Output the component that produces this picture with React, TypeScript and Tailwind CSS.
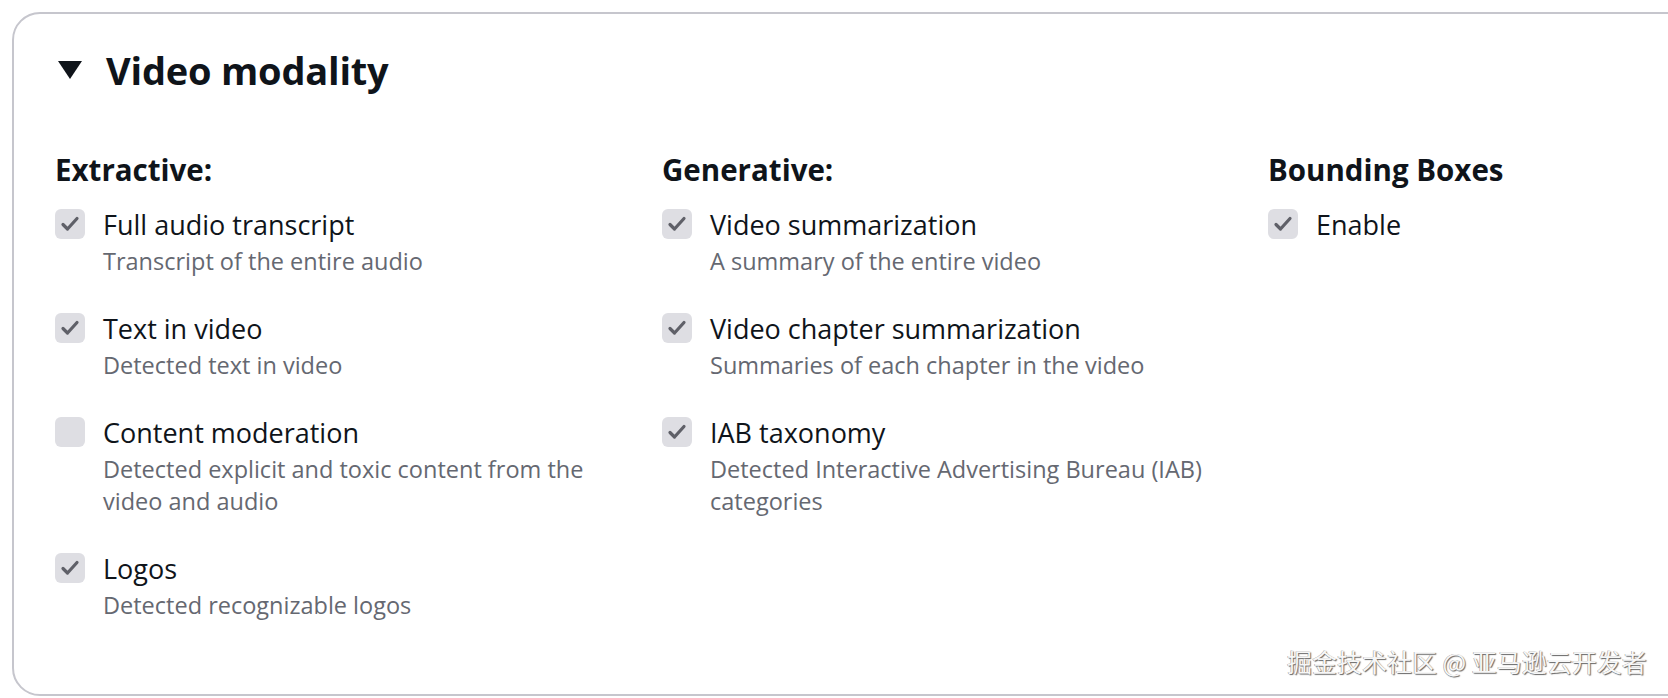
const font = { fontFamily: '"Open Sans", "Noto Sans", sans-serif' }

type Option = { label: string; desc?: string; checked: boolean }

const columns: { title: string; items: Option[] }[] = [
  {
    title: 'Extractive:',
    items: [
      { label: 'Full audio transcript', desc: 'Transcript of the entire audio', checked: true },
      { label: 'Text in video', desc: 'Detected text in video', checked: true },
      {
        label: 'Content moderation',
        desc: 'Detected explicit and toxic content from the video and audio',
        checked: false,
      },
      { label: 'Logos', desc: 'Detected recognizable logos', checked: true },
    ],
  },
  {
    title: 'Generative:',
    items: [
      { label: 'Video summarization', desc: 'A summary of the entire video', checked: true },
      { label: 'Video chapter summarization', desc: 'Summaries of each chapter in the video', checked: true },
      { label: 'IAB taxonomy', desc: 'Detected Interactive Advertising Bureau (IAB) categories', checked: true },
    ],
  },
  {
    title: 'Bounding Boxes',
    items: [{ label: 'Enable', checked: true }],
  },
]

function Checkbox({ checked }: { checked: boolean }) {
  return (
    <div className="mt-[4px] w-[30px] h-[30px] shrink-0 rounded-[6px] bg-[#dedee3] flex items-center justify-center">
      {checked && (
        <svg width="30" height="30" viewBox="0 0 30 30">
          <path d="M8 15.5 L12.5 20 L22 9.5" fill="none" stroke="#5f6068" strokeWidth="3.2" strokeLinecap="round" strokeLinejoin="round" />
        </svg>
      )}
    </div>
  )
}

export default function App() {
  return (
    <div className="relative w-[1668px] h-[698px] bg-white overflow-hidden pt-[12px] pl-[12px]" style={font}>
      <div className="w-[1720px] h-[684px] border-[2px] border-[#c6c6cd] rounded-[28px] pl-[41px] pt-[34px]">
        <div className="flex items-center h-[44px]">
          <svg width="24" height="18" viewBox="0 0 24 18" className="ml-[3px]">
            <path d="M0 0 H24 L12 18 Z" fill="#0f141a" />
          </svg>
          <h2 className="ml-[24px] text-[38px] leading-[44px] font-bold text-[#0f141a] tracking-[-0.2px]">Video modality</h2>
        </div>

        <div className="mt-[60px] grid grid-cols-[607px_606px_1fr]">
          {columns.map((col) => (
            <div key={col.title}>
              <h3 className="text-[29.5px] leading-[36px] font-bold text-[#0f141a]">{col.title}</h3>
              <div className="mt-[17px] flex flex-col gap-[32px]">
                {col.items.map((item) => (
                  <div key={item.label} className="flex gap-[18px]">
                    <Checkbox checked={item.checked} />
                    <div className="max-w-[520px]">
                      <div className="text-[27px] leading-[40px] text-[#0f141a]">{item.label}</div>
                      {item.desc && (
                        <div className="text-[23.5px] leading-[32px] text-[#656871]">{item.desc}</div>
                      )}
                    </div>
                  </div>
                ))}
              </div>
            </div>
          ))}
        </div>
      </div>

      <div
        className="absolute left-[1287px] top-[644px] text-[25px] leading-[34px] text-[#f7f7f7] [text-shadow:1px_1px_1px_#666666,-0.5px_-0.5px_0_#999999]"
        style={{ fontFamily: '"Noto Sans CJK SC", "Liberation Sans", sans-serif' }}
      >
        掘金技术社区 @ 亚马逊云开发者
      </div>
    </div>
  )
}
